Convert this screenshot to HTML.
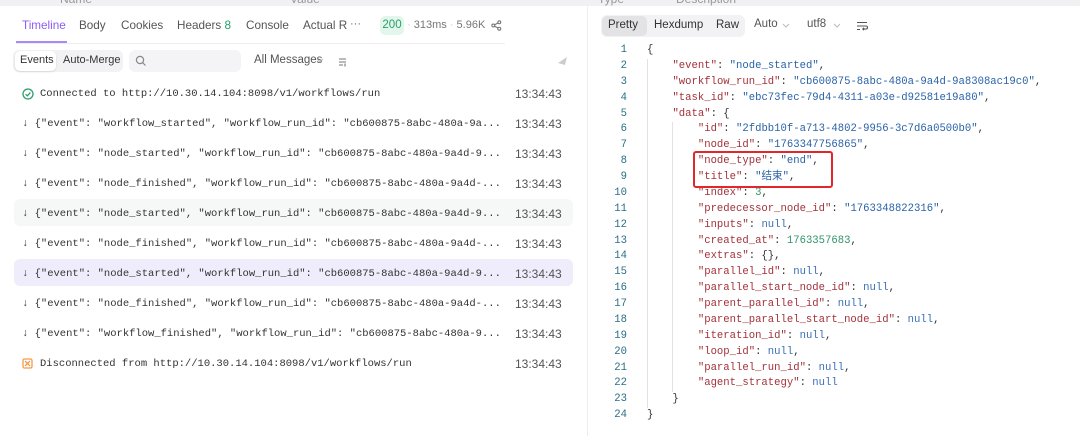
<!DOCTYPE html>
<html><head><meta charset="utf-8"><style>
*{margin:0;padding:0;box-sizing:border-box}
body{width:1080px;height:436px;background:#fff;font-family:"Liberation Sans","Noto Sans CJK SC",sans-serif;position:relative;overflow:hidden;color:#333}
.abs{position:absolute;white-space:nowrap}
.mono{font-family:"Liberation Mono","Noto Sans CJK SC",monospace}
.top{position:absolute;left:0;top:0;width:1080px;height:6px;background:#f1f1f4;overflow:hidden}
.tab{font-size:11.7px;color:#555;top:19px}
.ev{position:absolute;left:14px;width:559px;height:27px;border-radius:6px}
.row{font-size:10.5px;color:#333;left:22px}
.time{font-size:12px;color:#555;left:515px}
.ln{position:absolute;left:600px;width:27px;text-align:right;font-size:10.6px;color:#2b6e86}
.code{position:absolute;font-size:10.6px;color:#333;white-space:pre}
.k{color:#a2323a}.s{color:#2a62a7}.n{color:#2f9468}.nl{color:#3a6fb5}
.chev{position:absolute}
</style></head><body>
<div class="top"><span class="abs" style="left:60px;top:-8px;font-size:12px;color:#999">Name</span><span class="abs" style="left:290px;top:-8px;font-size:12px;color:#999">Value</span><span class="abs" style="left:598px;top:-8px;font-size:12px;color:#999">Type</span><span class="abs" style="left:676px;top:-8px;font-size:12px;color:#999">Description</span></div>
<div style="position:absolute;left:587px;top:6px;width:1px;height:430px;background:#eee"></div>

<!-- left tabs -->
<span class="abs tab" style="left:22px;color:#8b5cf6">Timeline</span>
<div style="position:absolute;left:16px;top:41px;width:51px;height:2px;background:#a78bfa"></div>
<span class="abs tab" style="left:79px">Body</span>
<span class="abs tab" style="left:121px">Cookies</span>
<span class="abs tab" style="left:177px">Headers <span style="color:#22a06b">8</span></span>
<span class="abs tab" style="left:246px">Console</span>
<span class="abs tab" style="left:303px">Actual R</span>
<span class="abs" style="left:350px;top:18px;font-size:11px;color:#666">···</span>
<div style="position:absolute;left:380px;top:16px;width:24px;height:19px;background:#e3f6ec;border-radius:5px;color:#2aa06b;font-size:11.5px;text-align:center;line-height:19px">200</div>
<span class="abs" style="left:407px;top:19px;font-size:11px;color:#777"><span style="color:#ccc">·</span> 313ms <span style="color:#ccc">·</span> 5.96K</span>
<svg style="position:absolute;left:491px;top:20px" width="11" height="11" viewBox="0 0 12 12" fill="none" stroke="#777" stroke-width="1.2"><circle cx="9" cy="2.5" r="1.6"/><circle cx="2.5" cy="6" r="1.6"/><circle cx="9" cy="9.5" r="1.6"/><path d="M4 5.2L7.6 3.3M4 6.8L7.6 8.7"/></svg>
<div style="position:absolute;left:16px;top:43px;width:489px;height:1px;background:#eee"></div>

<!-- toolbar -->
<div style="position:absolute;left:13px;top:50px;width:110px;height:22px;background:#f2f2f4;border-radius:6px"></div>
<div style="position:absolute;left:15px;top:51px;width:41px;height:20px;background:#fff;border-radius:5px;box-shadow:0 1px 2px rgba(0,0,0,.12)"></div>
<span class="abs" style="left:20px;top:54px;font-size:11px;color:#333">Events</span>
<span class="abs" style="left:63px;top:54px;font-size:11px;color:#333">Auto-Merge</span>
<div style="position:absolute;left:129px;top:50px;width:112px;height:22px;background:#f4f4f6;border-radius:6px"></div>
<svg style="position:absolute;left:135px;top:55px" width="12" height="12" viewBox="0 0 12 12" fill="none" stroke="#888" stroke-width="1.2"><circle cx="5" cy="5" r="3.6"/><path d="M7.8 7.8L10.5 10.5"/></svg>
<span class="abs" style="left:254px;top:54px;font-size:11.5px;color:#555">All Messages</span>
<svg class="chev" style="left:316px;top:58px" width="8" height="5" viewBox="0 0 8 5" fill="none" stroke="#bbb"><path d="M1 1L4 4L7 1"/></svg>
<svg style="position:absolute;left:338px;top:57px" width="10" height="10" viewBox="0 0 10 10" stroke="#777" stroke-width="1.1"><path d="M1 2H8M1 5H8M1 8H5M7 6.5V9.5"/></svg>
<svg style="position:absolute;left:557px;top:55px" width="12" height="12" viewBox="0 0 12 12" fill="#ccc"><path d="M1 8L10 2L8 10Z"/></svg>

<!-- events -->
<div class="ev" style="top:199px;background:#f6f7f7"></div>
<div class="ev" style="top:259px;background:#efecfb"></div>
<svg style="position:absolute;left:22px;top:88px" width="12" height="12" viewBox="0 0 12 12" fill="none" stroke="#2aa06b" stroke-width="1.3"><circle cx="6" cy="6" r="5"/><path d="M3.6 6.2L5.3 7.8L8.4 4.6"/></svg>
<span class="abs mono row" style="left:40px;top:88px">Connected to http://10.30.14.104:8098/v1/workflows/run</span>
<span class="abs time" style="top:87px">13:34:43</span>

<span class="abs mono row" style="top:118px">↓ {"event": "workflow_started", "workflow_run_id": "cb600875-8abc-480a-9a...</span><span class="abs time" style="top:117px">13:34:43</span>
<span class="abs mono row" style="top:148px">↓ {"event": "node_started", "workflow_run_id": "cb600875-8abc-480a-9a4d-9...</span><span class="abs time" style="top:147px">13:34:43</span>
<span class="abs mono row" style="top:178px">↓ {"event": "node_finished", "workflow_run_id": "cb600875-8abc-480a-9a4d-...</span><span class="abs time" style="top:177px">13:34:43</span>
<span class="abs mono row" style="top:208px">↓ {"event": "node_started", "workflow_run_id": "cb600875-8abc-480a-9a4d-9...</span><span class="abs time" style="top:207px">13:34:43</span>
<span class="abs mono row" style="top:238px">↓ {"event": "node_finished", "workflow_run_id": "cb600875-8abc-480a-9a4d-...</span><span class="abs time" style="top:237px">13:34:43</span>
<span class="abs mono row" style="top:268px">↓ {"event": "node_started", "workflow_run_id": "cb600875-8abc-480a-9a4d-9...</span><span class="abs time" style="top:267px">13:34:43</span>
<span class="abs mono row" style="top:298px">↓ {"event": "node_finished", "workflow_run_id": "cb600875-8abc-480a-9a4d-...</span><span class="abs time" style="top:297px">13:34:43</span>
<span class="abs mono row" style="top:328px">↓ {"event": "workflow_finished", "workflow_run_id": "cb600875-8abc-480a-9...</span><span class="abs time" style="top:327px">13:34:43</span>
<svg style="position:absolute;left:22px;top:358px" width="11" height="11" viewBox="0 0 11 11" fill="none" stroke="#f39a4a" stroke-width="1.3"><rect x="1" y="1" width="9" height="9" rx="1.5"/><path d="M3 3L8 8M8 3L3 8"/></svg>
<span class="abs mono row" style="left:40px;top:358px">Disconnected from http://10.30.14.104:8098/v1/workflows/run</span>
<span class="abs time" style="top:357px">13:34:43</span>

<!-- right toolbar -->
<div style="position:absolute;left:601px;top:15px;width:144px;height:22px;background:#f2f2f4;border-radius:6px"></div>
<div style="position:absolute;left:602px;top:16px;width:45px;height:20px;background:#e3e3e6;border-radius:5px"></div>
<span class="abs" style="left:608px;top:19px;font-size:11.5px;color:#333">Pretty</span>
<span class="abs" style="left:654px;top:19px;font-size:11.5px;color:#333">Hexdump</span>
<span class="abs" style="left:716px;top:19px;font-size:11.5px;color:#333">Raw</span>
<span class="abs" style="left:754px;top:18px;font-size:11.5px;color:#555">Auto</span>
<svg class="chev" style="left:782px;top:23px" width="8" height="5" viewBox="0 0 8 5" fill="none" stroke="#bbb"><path d="M1 1L4 4L7 1"/></svg>
<span class="abs" style="left:807px;top:18px;font-size:11.5px;color:#555">utf8</span>
<svg class="chev" style="left:833px;top:23px" width="8" height="5" viewBox="0 0 8 5" fill="none" stroke="#bbb"><path d="M1 1L4 4L7 1"/></svg>
<svg style="position:absolute;left:856px;top:21px" width="12" height="10" viewBox="0 0 12 10" fill="none" stroke="#555" stroke-width="1.1"><path d="M1 1.5H11M1 5H10A1.5 1.5 0 0 1 10 8H7M8 6.8L6.8 8L8 9.2M1 8.5H4"/></svg>

<!-- guides -->
<div style="position:absolute;left:647px;top:59px;width:1px;height:349px;background:#e2e2e2"></div>
<div style="position:absolute;left:672px;top:122px;width:1px;height:270px;background:#e2e2e2"></div>

<div class="mono">
<div class="ln" style="top:43px;line-height:15.87px">1<br>2<br>3<br>4<br>5<br>6<br>7<br>8<br>9<br>10<br>11<br>12<br>13<br>14<br>15<br>16<br>17<br>18<br>19<br>20<br>21<br>22<br>23<br>24</div>
<div class="code" style="left:647px;top:43px;line-height:15.87px">{
    <span class="k">"event"</span>: <span class="s">"node_started"</span>,
    <span class="k">"workflow_run_id"</span>: <span class="s">"cb600875-8abc-480a-9a4d-9a8308ac19c0"</span>,
    <span class="k">"task_id"</span>: <span class="s">"ebc73fec-79d4-4311-a03e-d92581e19a80"</span>,
    <span class="k">"data"</span>: {
        <span class="k">"id"</span>: <span class="s">"2fdbb10f-a713-4802-9956-3c7d6a0500b0"</span>,
        <span class="k">"node_id"</span>: <span class="s">"1763347756865"</span>,
        <span class="k">"node_type"</span>: <span class="s">"end"</span>,
        <span class="k">"title"</span>: <span class="s">"结束"</span>,
        <span class="k">"index"</span>: <span class="n">3</span>,
        <span class="k">"predecessor_node_id"</span>: <span class="s">"1763348822316"</span>,
        <span class="k">"inputs"</span>: <span class="nl">null</span>,
        <span class="k">"created_at"</span>: <span class="n">1763357683</span>,
        <span class="k">"extras"</span>: {},
        <span class="k">"parallel_id"</span>: <span class="nl">null</span>,
        <span class="k">"parallel_start_node_id"</span>: <span class="nl">null</span>,
        <span class="k">"parent_parallel_id"</span>: <span class="nl">null</span>,
        <span class="k">"parent_parallel_start_node_id"</span>: <span class="nl">null</span>,
        <span class="k">"iteration_id"</span>: <span class="nl">null</span>,
        <span class="k">"loop_id"</span>: <span class="nl">null</span>,
        <span class="k">"parallel_run_id"</span>: <span class="nl">null</span>,
        <span class="k">"agent_strategy"</span>: <span class="nl">null</span>
    }
}</div>
</div>
<div style="position:absolute;left:693px;top:151px;width:140px;height:37px;border:2px solid #e3262a;border-radius:3px"></div>
</body></html>
